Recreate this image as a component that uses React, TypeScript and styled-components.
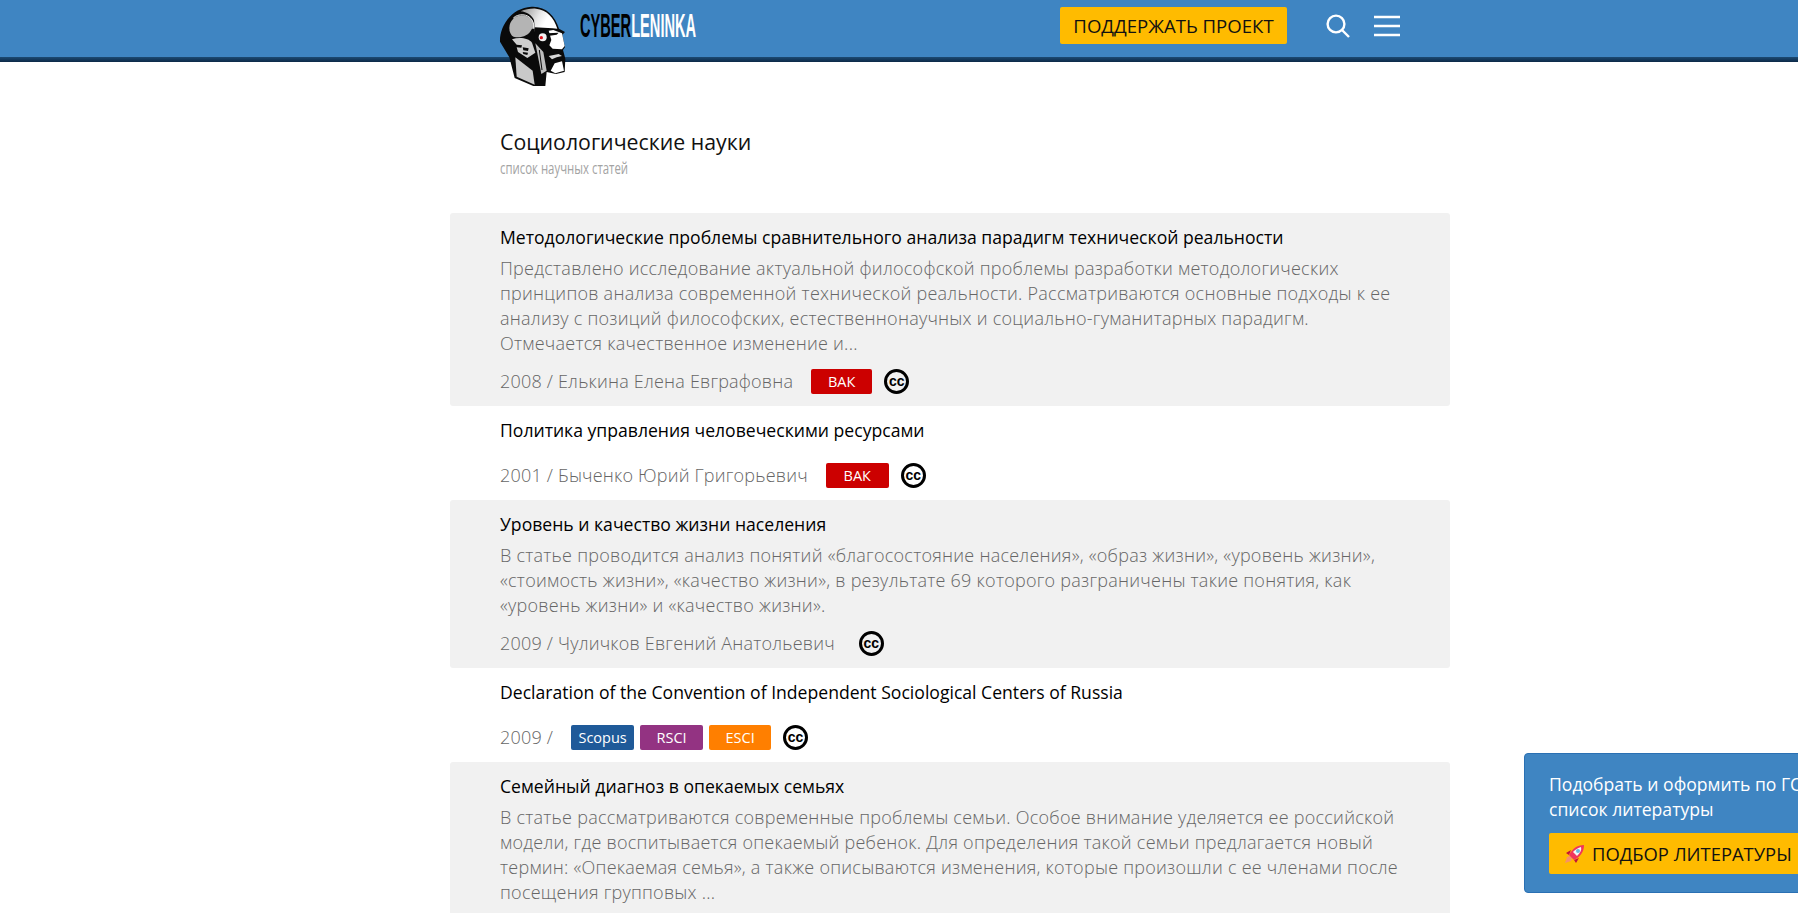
import React from "react";
import styled, { createGlobalStyle } from "styled-components";

const GlobalStyle = createGlobalStyle`
  html, body {
    margin: 0;
    height: 100%;
    overflow: hidden;
    background: #fff;
    font-family: "Open Sans", "Liberation Sans", sans-serif;
  }
`;

const Header = styled.header`
  height: 62px;
  background: linear-gradient(#3f85c2 0 57px, #1c4a73 57px, #0c2947 62px);
`;

const HeaderInner = styled.div`
  width: 900px;
  height: 57px;
  margin-left: 500px;
  display: flex;
  align-items: flex-start;
`;

const LogoHead = styled.svg`
  width: 90px;
  height: 90px;
  margin-left: -10px;
  flex: none;
  position: relative;
`;

const LogoText = styled.div`
  width: 115px;
  margin-top: 8px;
  font-family: "Liberation Sans", sans-serif;
  font-weight: 700;
  font-size: 33px;
  line-height: 36px;
  white-space: nowrap;
  color: #000;
  transform: scaleX(0.443);
  transform-origin: left center;

  span {
    color: #fff;
  }
`;

const HeaderActions = styled.div`
  margin-left: auto;
  display: flex;
  align-items: center;
  height: 51px;
`;

const SupportButton = styled.a`
  width: 227px;
  height: 37px;
  margin-right: 39px;
  display: flex;
  align-items: center;
  justify-content: center;
  background: #ffbb00;
  border-radius: 2px;
  font-size: 18.6px;
  color: #111;
`;

const IconButton = styled.span`
  display: flex;
  color: #fff;
  margin-left: ${(p: { $gap?: number }) => p.$gap ?? 0}px;
`;

const Main = styled.main`
  width: 1000px;
  margin-left: 450px;
`;

const PageHead = styled.div`
  padding: 65px 50px 34px;
`;

const PageTitle = styled.h1`
  margin: 0;
  font-size: 21.3px;
  line-height: 30px;
  font-weight: 400;
  color: #111;
`;

const PageSub = styled.div`
  font-size: 17px;
  line-height: 22px;
  font-weight: 400;
  color: #a3a3a3;
  white-space: nowrap;
  transform: scaleX(0.67);
  transform-origin: left center;
`;

const Card = styled.article<{ $shaded?: boolean }>`
  padding: 12px 50px;
  background: ${(p) => (p.$shaded ? "#f1f1f1" : "transparent")};
  border-radius: 3px;
`;

const CardTitle = styled.h2`
  margin: 0 0 6px;
  font-size: 17.6px;
  line-height: 25px;
  font-weight: 400;
  color: #000;
`;

const Abstract = styled.p`
  margin: 0 0 13px;
  min-height: 1px;
  font-size: 18px;
  letter-spacing: 0.25px;
  line-height: 25px;
  font-weight: 300;
  color: #666;
`;

const Meta = styled.div`
  display: flex;
  align-items: center;
  height: 25px;
  font-size: 18px;
  letter-spacing: 0.2px;
  font-weight: 300;
  color: #666;
`;

const Author = styled.span`
  margin: 0 18px 2px 0;
`;

const Tag = styled.span<{ $bg: string; $w: number }>`
  width: ${(p) => p.$w}px;
  height: 25px;
  margin-right: 6px;
  display: flex;
  align-items: center;
  justify-content: center;
  background: ${(p) => p.$bg};
  border-radius: 2px;
  font-size: 14.5px;
  letter-spacing: 0;
  font-weight: 500;
  color: #fff;
`;

const CcBadge = styled.span`
  width: 25px;
  height: 25px;
  box-sizing: border-box;
  margin-left: 6px;
  display: flex;
  align-items: center;
  justify-content: center;
  border: 3px solid #000;
  border-radius: 50%;
  font-family: "Liberation Sans", sans-serif;
  font-size: 14px;
  letter-spacing: 0;
  line-height: 1;
  font-weight: 700;
  color: #000;
  padding-bottom: 2px;
`;

const PickerPanel = styled.aside`
  position: fixed;
  left: 1524px;
  top: 753px;
  width: 400px;
  height: 140px;
  box-sizing: border-box;
  padding: 18px 24px;
  background: #3f85c2;
  border: 1px solid #2a70b3;
  border-radius: 4px;
  color: #fff;
  font-size: 17.6px;
  line-height: 25px;
`;

const PickerButton = styled.div`
  height: 41px;
  margin-top: 11px;
  padding-left: 16px;
  display: flex;
  align-items: center;
  gap: 7px;
  background: #ffbb00;
  border-radius: 2px;
  font-size: 18.4px;
  color: #111;
`;

type Item = {
  title: string;
  text?: string;
  meta: string;
  tags?: { label: string; bg: string; w: number }[];
  noMeta?: boolean;
};

const items: Item[] = [
  {
    title: "Методологические проблемы сравнительного анализа парадигм технической реальности",
    text: "Представлено исследование актуальной философской проблемы разработки методологических принципов анализа современной технической реальности. Рассматриваются основные подходы к ее анализу с позиций философских, естественнонаучных и социально-гуманитарных парадигм. Отмечается качественное изменение и...",
    meta: "2008 / Елькина Елена Евграфовна",
    tags: [{ label: "ВАК", bg: "#cc0000", w: 61 }],
  },
  {
    title: "Политика управления человеческими ресурсами",
    meta: "2001 / Быченко Юрий Григорьевич",
    tags: [{ label: "ВАК", bg: "#cc0000", w: 63 }],
  },
  {
    title: "Уровень и качество жизни населения",
    text: "В статье проводится анализ понятий «благосостояние населения», «образ жизни», «уровень жизни», «стоимость жизни», «качество жизни», в результате 69 которого разграничены такие понятия, как «уровень жизни» и «качество жизни».",
    meta: "2009 / Чуличков Евгений Анатольевич",
  },
  {
    title: "Declaration of the Convention of Independent Sociological Centers of Russia",
    meta: "2009 /",
    tags: [
      { label: "Scopus", bg: "#1f5a99", w: 63 },
      { label: "RSCI", bg: "#933382", w: 63 },
      { label: "ESCI", bg: "#ff7f00", w: 62 },
    ],
  },
  {
    title: "Семейный диагноз в опекаемых семьях",
    text: "В статье рассматриваются современные проблемы семьи. Особое внимание уделяется ее российской модели, где воспитывается опекаемый ребенок. Для определения такой семьи предлагается новый термин: «Опекаемая семья», а также описываются изменения, которые произошли с ее членами после посещения групповых ...",
    meta: "",
    noMeta: true,
  },
];

const HeadIcon = () => (
  <LogoHead viewBox="0 0 270 270">
    <defs>
      <linearGradient id="skull" x1="0" y1="0" x2="1" y2="0.3">
        <stop offset="0" stopColor="#8f8f8f" />
        <stop offset="0.55" stopColor="#e6e6e6" />
        <stop offset="0.8" stopColor="#ffffff" />
      </linearGradient>
    </defs>
    {/* silhouette */}
    <path
      d="M30 125C28 85 58 24 125 20c42-2 70 26 82 66l18 10-8 8 8 38-6 8 7 26-2 40-26 6-28-6-4 42h-36l-56-24-16-62z"
      fill="#0a0a0a"
    />
    {/* skull */}
    <path d="M92 34c14-6 30-9 46-8 32 3 54 26 64 60l-14-1-54-3-2-22c-6-14-22-24-40-26z" fill="url(#skull)" />
    {/* ear disc */}
    <circle cx="96" cy="84" r="38" fill="#b4b4b4" />
    <path d="M70 54c14-14 44-14 56 6 6 10 6 20 4 28" fill="none" stroke="#efefef" strokeWidth="3" />
    <path d="M134 86L134 122 88 118 52 120 64 108c20 8 50 4 62-22z" fill="#0a0a0a" />
    {/* cheek and jaw */}
    <path d="M66 118c22-8 50-4 60 10l10 30-24 16-28-18-4-14 14 1 2-7-16-2z" fill="#cfcfcf" />
    <path d="M98 142l18 3-2 8-14-2zM98 156l16 2-2 7-12-3z" fill="#0a0a0a" />
    <path d="M136 130l24 26 10 56-16 10-10-52z" fill="#bdbdbd" />
    <path d="M148 150l8 60" stroke="#0a0a0a" strokeWidth="3" />
    {/* face */}
    <path d="M176 92l14-2 26 10 8 38-8 10-28-2-10-10 6-16z" fill="#fff" />
    <path d="M172 100l34-2-6 6-26 4z" fill="#0a0a0a" />
    <path d="M176 168l30-6 10 6-16 4-14 6z" fill="#d8d8d8" />
    {/* beard */}
    <path d="M194 190l22-6 6 28-26 8-14-8z" fill="#fff" />
    {/* neck */}
    <path d="M76 172l52 40 6 42-54-24z" fill="#c9c9c9" />
    {/* eye */}
    <circle cx="158" cy="112" r="12" fill="#f2f2f2" />
    <circle cx="154" cy="113" r="5" fill="#e2141c" />
  </LogoHead>
);

const SearchIcon = () => (
  <svg width="24" height="24" viewBox="0 0 24 24" fill="none" stroke="currentColor" strokeWidth="2.4">
    <circle cx="10" cy="10" r="8.4" />
    <path d="M16 16l7 7" />
  </svg>
);

const MenuIcon = () => (
  <svg width="26" height="22" viewBox="0 0 26 22" fill="none" stroke="currentColor" strokeWidth="2.4">
    <path d="M0 2h26M0 11h26M0 20h26" />
  </svg>
);

const RocketIcon = () => (
  <svg width="20" height="20" viewBox="0 0 20 20">
    <path d="M2 13l-2 6 6-2 1-3-2-2z" fill="#f7906a" />
    <path d="M6 6L1 9l3 2zM14 14l-3 5-2-3z" fill="#c2103a" />
    <path d="M4 11C7 5 12 1 19 1c0 7-4 12-10 15z" fill="#f0355c" />
    <path d="M8 8c2-2 4-4 8-5 1 3-1 6-4 9z" fill="#f5f5f5" />
    <circle cx="13" cy="7" r="2" fill="#6bb8d8" />
  </svg>
);

const App = () => {
  return (
    <>
      <GlobalStyle />
      <Header>
        <HeaderInner>
          <HeadIcon />
          <LogoText>
            CYBER<span>LENINKA</span>
          </LogoText>
          <HeaderActions>
            <SupportButton>ПОДДЕРЖАТЬ ПРОЕКТ</SupportButton>
            <IconButton>
              <SearchIcon />
            </IconButton>
            <IconButton $gap={24}>
              <MenuIcon />
            </IconButton>
          </HeaderActions>
        </HeaderInner>
      </Header>
      <Main>
        <PageHead>
          <PageTitle>Социологические науки</PageTitle>
          <PageSub>список научных статей</PageSub>
        </PageHead>
        {items.map((item, i) => (
          <Card key={item.title} $shaded={i % 2 === 0}>
            <CardTitle>{item.title}</CardTitle>
            <Abstract>{item.text}</Abstract>
            {!item.noMeta && (
              <Meta>
                <Author>{item.meta}</Author>
                {item.tags?.map((tag) => (
                  <Tag key={tag.label} $bg={tag.bg} $w={tag.w}>
                    {tag.label}
                  </Tag>
                ))}
                <CcBadge>cc</CcBadge>
              </Meta>
            )}
          </Card>
        ))}
      </Main>
      <PickerPanel>
        Подобрать и оформить по ГОСТ
        <br />
        список литературы
        <PickerButton>
          <RocketIcon />
          ПОДБОР ЛИТЕРАТУРЫ
        </PickerButton>
      </PickerPanel>
    </>
  );
};

export default App;
